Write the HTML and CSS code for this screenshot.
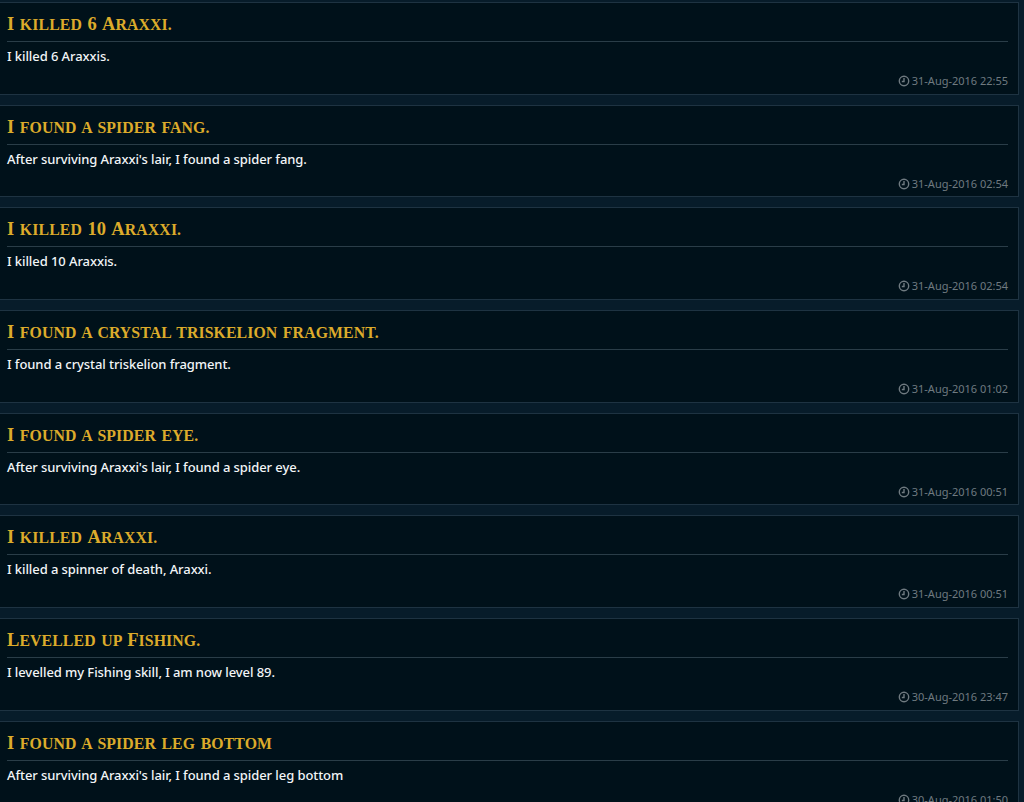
FILE: index.html
```html
<!DOCTYPE html>
<html lang="en">
<head>
<meta charset="utf-8">
<title>Adventurer's log</title>
<link rel="stylesheet" href="styles.css">
</head>
<body>
<main class="log">
<article class="entry"><h2 class="entry-title"><span class="cap">I</span> killed <span class="cap">6 A</span>raxxi.</h2><p class="entry-text">I killed 6 Araxxis.</p><p class="entry-date"><svg class="clock" viewBox="0 0 12 12"><circle cx="6" cy="6" r="4.7"/><path d="M6 3V6.5H3.8"/></svg>31-Aug-2016 22:55</p></article>
<article class="entry"><h2 class="entry-title"><span class="cap">I</span> found a spider fang.</h2><p class="entry-text">After surviving Araxxi's lair, I found a spider fang.</p><p class="entry-date"><svg class="clock" viewBox="0 0 12 12"><circle cx="6" cy="6" r="4.7"/><path d="M6 3V6.5H3.8"/></svg>31-Aug-2016 02:54</p></article>
<article class="entry"><h2 class="entry-title"><span class="cap">I</span> killed <span class="cap">10 A</span>raxxi.</h2><p class="entry-text">I killed 10 Araxxis.</p><p class="entry-date"><svg class="clock" viewBox="0 0 12 12"><circle cx="6" cy="6" r="4.7"/><path d="M6 3V6.5H3.8"/></svg>31-Aug-2016 02:54</p></article>
<article class="entry"><h2 class="entry-title"><span class="cap">I</span> found a crystal triskelion fragment.</h2><p class="entry-text">I found a crystal triskelion fragment.</p><p class="entry-date"><svg class="clock" viewBox="0 0 12 12"><circle cx="6" cy="6" r="4.7"/><path d="M6 3V6.5H3.8"/></svg>31-Aug-2016 01:02</p></article>
<article class="entry"><h2 class="entry-title"><span class="cap">I</span> found a spider eye.</h2><p class="entry-text">After surviving Araxxi's lair, I found a spider eye.</p><p class="entry-date"><svg class="clock" viewBox="0 0 12 12"><circle cx="6" cy="6" r="4.7"/><path d="M6 3V6.5H3.8"/></svg>31-Aug-2016 00:51</p></article>
<article class="entry"><h2 class="entry-title"><span class="cap">I</span> killed <span class="cap">A</span>raxxi.</h2><p class="entry-text">I killed a spinner of death, Araxxi.</p><p class="entry-date"><svg class="clock" viewBox="0 0 12 12"><circle cx="6" cy="6" r="4.7"/><path d="M6 3V6.5H3.8"/></svg>31-Aug-2016 00:51</p></article>
<article class="entry"><h2 class="entry-title"><span class="cap">L</span>evelled up <span class="cap">F</span>ishing.</h2><p class="entry-text">I levelled my Fishing skill, I am now level 89.</p><p class="entry-date"><svg class="clock" viewBox="0 0 12 12"><circle cx="6" cy="6" r="4.7"/><path d="M6 3V6.5H3.8"/></svg>30-Aug-2016 23:47</p></article>
<article class="entry"><h2 class="entry-title"><span class="cap">I</span> found a spider leg bottom</h2><p class="entry-text">After surviving Araxxi's lair, I found a spider leg bottom</p><p class="entry-date"><svg class="clock" viewBox="0 0 12 12"><circle cx="6" cy="6" r="4.7"/><path d="M6 3V6.5H3.8"/></svg>30-Aug-2016 01:50</p></article>
</main>
</body>
</html>
```
FILE: styles.css
```css
html, body { margin: 0; padding: 0; height: 802px; overflow: hidden; background: #071c2a; }
.log { margin: 1.9px 5px 0 -1px; display: flex; flex-direction: column; gap: 10px; }
.entry { box-sizing: border-box; height: 92.7px; flex: none; background: #00111a; border: 1px solid #1e3342; padding: 0 10px 0 7px; display: flex; flex-direction: column; }
.entry-title { margin: 0; height: 38px; border-bottom: 1px solid #2a3d48; font: 700 15.8px/43px "Liberation Serif", serif; text-transform: uppercase; letter-spacing: 0.1px; word-spacing: 1.5px; color: #dcab2b; }
.cap { font-size: 18.5px; }
.entry-text { margin: 0; height: 29px; font: 500 13px/29px "Noto Sans", sans-serif; letter-spacing: -0.08px; color: #f2f5f7; }
.entry-date { margin: 0; height: 20px; display: flex; justify-content: flex-end; align-items: center; gap: 2px; font: 400 11px/20px "Noto Sans", sans-serif; letter-spacing: -0.01px; color: #6f7a80; }
.clock { width: 12px; height: 12px; fill: none; stroke: #6f7a80; stroke-width: 1.4; }
```
